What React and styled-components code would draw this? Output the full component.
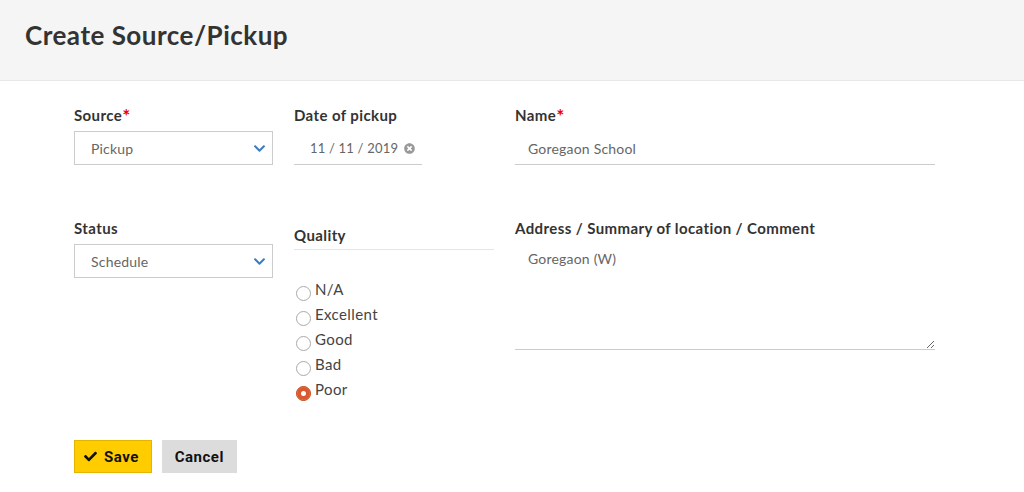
import React, { useState } from "react";
import styled, { createGlobalStyle } from "styled-components";
import { FaChevronDown, FaCheck, FaTimesCircle } from "react-icons/fa";

const GlobalStyle = createGlobalStyle`
  body {
    margin: 0;
    background: #fff;
    font-family: "Lato", "Open Sans", sans-serif;
    color: #333;
  }
  * { box-sizing: border-box; }
`;

const Header = styled.div`
  height: 81px;
  background: #f5f5f5;
  border-bottom: 1px solid #e8e8e8;
  padding: 19px 25px 0;
`;

const Title = styled.h1`
  margin: 0;
  font-size: 26px;
  font-weight: 700;
  color: #333;
  letter-spacing: 0.5px;
`;

const Form = styled.form`
  padding: 25px 0 0 74px;
`;

const Grid = styled.div`
  display: grid;
  grid-template-columns: 199px 200px 420px;
  column-gap: 21px;
  row-gap: 54px;
`;

const Field = styled.div`
  display: flex;
  flex-direction: column;
`;

const Label = styled.label`
  font-size: 15px;
  font-weight: 700;
  line-height: 18px;
  letter-spacing: 0.4px;
  color: #333;
  margin-bottom: 7px;
`;

const Req = styled.span`
  color: #e00;
  font-size: 19px;
  line-height: 10px;
  position: relative;
  top: 2px;
`;

const SelectBox = styled.div`
  height: 34px;
  border: 1px solid #ccc;
  display: flex;
  align-items: center;
  justify-content: space-between;
  padding: 0 6px 0 16px;
  font-size: 14px;
  color: #666;
  letter-spacing: 0.2px;
  svg { color: #3b7dc3; }
`;

const LineInput = styled.div`
  height: 34px;
  width: ${(p) => p.$width || "100%"};
  border-bottom: 1px solid #ccc;
  display: flex;
  align-items: center;
  gap: 6px;
  padding-left: ${(p) => p.$pad || 13}px;
  padding-top: 1px;
  font-size: ${(p) => p.$size || 14}px;
  color: #666;
  letter-spacing: 0.2px;
  svg { color: #999; }
`;

const Legend = styled.div`
  font-size: 15px;
  font-weight: 700;
  line-height: 18px;
  letter-spacing: 0.4px;
  color: #333;
  margin-top: 7px;
  padding-bottom: 5px;
  border-bottom: 1px solid #e5e5e5;
  margin-bottom: 23px;
`;

const RadioRow = styled.label`
  display: flex;
  align-items: flex-end;
  height: 25px;
  font-size: 15px;
  color: #444;
  letter-spacing: 0.4px;
  cursor: pointer;
`;

const Radio = styled.input.attrs({ type: "radio" })`
  appearance: none;
  width: 15px;
  height: 15px;
  margin: 0 4px -3px 2px;
  border-radius: 50%;
  border: 1px solid #aaa;
  background: #fff;
  &:checked {
    border-color: #c2481f;
    background: #d85a2e;
    box-shadow: inset 0 0 0 4px #d85a2e, inset 0 0 0 8px #fff;
  }
`;

const TextArea = styled.textarea`
  height: 106px;
  border: none;
  border-bottom: 1px solid #ccc;
  padding: 6px 13px;
  font-family: "Lato", "Open Sans", sans-serif;
  font-size: 14px;
  letter-spacing: 0.2px;
  color: #666;
  resize: vertical;
  outline: none;
`;

const Actions = styled.div`
  display: flex;
  gap: 10px;
  margin-top: 42px;
`;

const Button = styled.button`
  height: 33px;
  padding: 0 12px 0 ${(p) => (p.$primary ? 9 : 12)}px;
  display: flex;
  align-items: center;
  gap: 7px;
  border: 1px solid ${(p) => (p.$primary ? "#e3b500" : "#dcdcdc")};
  background: ${(p) => (p.$primary ? "#ffcc00" : "#dcdcdc")};
  font-family: "Roboto", "Liberation Sans", sans-serif;
  font-weight: 700;
  font-size: 15px;
  color: #111;
  letter-spacing: 0.5px;
  cursor: pointer;
`;

const qualities = ["N/A", "Excellent", "Good", "Bad", "Poor"];

export default function App() {
  const [quality, setQuality] = useState("Poor");
  return (
    <>
      <GlobalStyle />
      <Header>
        <Title>Create Source/Pickup</Title>
      </Header>
      <Form onSubmit={(e) => e.preventDefault()}>
        <Grid>
          <Field>
            <Label>
              Source<Req>*</Req>
            </Label>
            <SelectBox>
              Pickup
              <FaChevronDown size={13} />
            </SelectBox>
          </Field>
          <Field>
            <Label>Date of pickup</Label>
            <LineInput $width="128px" $pad={16} $size={13}>
              11 / 11 / 2019
              <FaTimesCircle size={11} />
            </LineInput>
          </Field>
          <Field>
            <Label>
              Name<Req>*</Req>
            </Label>
            <LineInput>Goregaon School</LineInput>
          </Field>

          <Field>
            <Label>Status</Label>
            <SelectBox>
              Schedule
              <FaChevronDown size={13} />
            </SelectBox>
          </Field>
          <Field>
            <Legend>Quality</Legend>
            {qualities.map((q) => (
              <RadioRow key={q}>
                <Radio
                  name="quality"
                  checked={quality === q}
                  onChange={() => setQuality(q)}
                />
                {q}
              </RadioRow>
            ))}
          </Field>
          <Field>
            <Label>Address / Summary of location / Comment</Label>
            <TextArea defaultValue="Goregaon (W)" />
          </Field>
        </Grid>
        <Actions>
          <Button $primary type="submit">
            <FaCheck size={13} />
            Save
          </Button>
          <Button type="button">Cancel</Button>
        </Actions>
      </Form>
    </>
  );
}
